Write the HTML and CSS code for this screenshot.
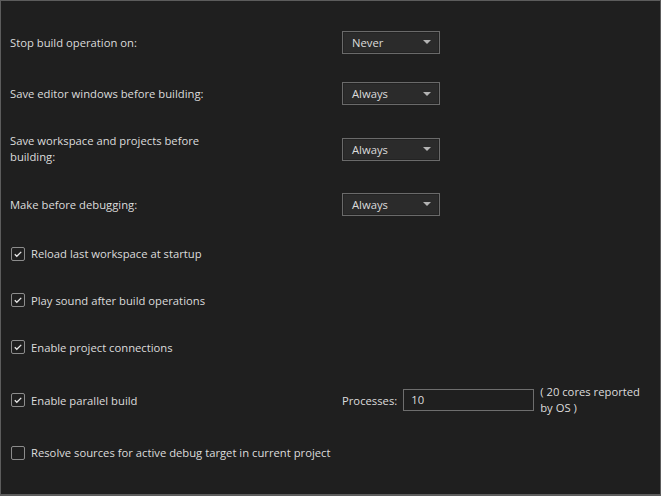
FILE: index.html
```html
<!DOCTYPE html>
<html lang="en">
<head>
    <meta charset="UTF-8">
    <title>Build Options</title>
    <link rel="stylesheet" href="styles.css">
</head>
<body>
    <div class="panel">
        <div class="row">
            <span class="label">Stop build operation on:</span>
            <div class="dropdown"><span>Never</span><i class="caret"></i></div>
        </div>
        <div class="row">
            <span class="label">Save editor windows before building:</span>
            <div class="dropdown"><span>Always</span><i class="caret"></i></div>
        </div>
        <div class="row tall">
            <span class="label narrow">Save workspace and projects before building:</span>
            <div class="dropdown"><span>Always</span><i class="caret"></i></div>
        </div>
        <div class="row">
            <span class="label">Make before debugging:</span>
            <div class="dropdown"><span>Always</span><i class="caret"></i></div>
        </div>

        <label class="check-row">
            <span class="box checked"><svg viewBox="0 0 13 13"><path d="M3 6.8l2.2 2.2 4.8-4.8"/></svg></span>
            Reload last workspace at startup
        </label>
        <label class="check-row">
            <span class="box checked"><svg viewBox="0 0 13 13"><path d="M3 6.8l2.2 2.2 4.8-4.8"/></svg></span>
            Play sound after build operations
        </label>
        <label class="check-row">
            <span class="box checked"><svg viewBox="0 0 13 13"><path d="M3 6.8l2.2 2.2 4.8-4.8"/></svg></span>
            Enable project connections
        </label>
        <div class="check-row parallel">
            <label class="label check-label">
                <span class="box checked"><svg viewBox="0 0 13 13"><path d="M3 6.8l2.2 2.2 4.8-4.8"/></svg></span>
                Enable parallel build
            </label>
            <span class="proc-label">Processes:</span>
            <div class="textbox">10</div>
            <span class="note">( 20 cores reported by OS )</span>
        </div>
        <label class="check-row">
            <span class="box"></span>
            Resolve sources for active debug target in current project
        </label>
    </div>
</body>
</html>
```

FILE: styles.css
```css
* {
    box-sizing: border-box;
}
body {
    margin: 0;
    background-color: #1f1f1f;
    font-family: "Open Sans", "Noto Sans", sans-serif;
    font-size: 11.25px;
    color: #dcdcdc;
}
.panel {
    width: 661px;
    height: 496px;
    border: 1px solid #5c5c5c;
    border-bottom-width: 2px;
    padding: 29.5px 0 0 9px;
    display: flex;
    flex-direction: column;
    gap: 28.8px;
}
.row {
    display: flex;
    align-items: center;
    height: 23px;
}
.row.tall {
    height: 30px;
}
.label {
    width: 332px;
    flex-shrink: 0;
}
.label.narrow {
    padding-right: 120px;
    line-height: 16px;
}
.dropdown {
    width: 98px;
    height: 23px;
    border: 1px solid #6a6a6a;
    background-color: #2b2b2b;
    box-shadow: inset 0 0 0 1px #232323;
    display: flex;
    align-items: center;
    justify-content: space-between;
    padding: 0 8px 0 9px;
}
.caret {
    width: 0;
    height: 0;
    border-left: 4px solid transparent;
    border-right: 4px solid transparent;
    border-top: 4px solid #b4b4b4;
}
.check-row {
    display: flex;
    align-items: center;
    height: 18px;
}
.check-row.parallel {
    height: 30px;
}
.check-label {
    display: flex;
    align-items: center;
}
.box {
    width: 14px;
    height: 14px;
    border: 1px solid #8c8c8c;
    border-radius: 2px;
    margin: 0 6px 0 1px;
    flex-shrink: 0;
}
.box svg {
    display: block;
    width: 12px;
    height: 12px;
    fill: none;
    stroke: #e8e8e8;
    stroke-width: 1.4;
}
.proc-label {
    margin-right: 6px;
}
.textbox {
    width: 131px;
    height: 22px;
    border: 1px solid #6e6e6e;
    padding: 2px 0 0 7px;
    margin-right: 6px;
}
.note {
    width: 105px;
    line-height: 16px;
}
```
